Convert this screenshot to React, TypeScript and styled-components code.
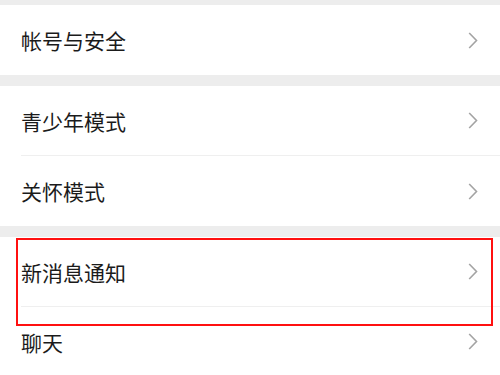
import styled, { createGlobalStyle } from "styled-components";

const GlobalStyle = createGlobalStyle`
  html, body {
    margin: 0;
    padding: 0;
    background: #ededed;
  }
  body {
    font-family: "Noto Sans CJK SC", "Noto Sans", sans-serif;
  }
`;

const Page = styled.div`
  display: flex;
  flex-direction: column;
  gap: 11px;
  padding-top: 5px;
  background: #ededed;
  min-height: 375px;
`;

const Group = styled.div`
  position: relative;
  background: #ffffff;
`;

const Row = styled.div`
  display: flex;
  align-items: center;
  justify-content: space-between;
  height: 69px;
  margin-left: 21px;
  padding-right: 22px;
  border-bottom: 1px solid #efefef;

  &:last-of-type {
    border-bottom: none;
    height: 70px;
  }
`;

const Label = styled.span`
  font-size: 21px;
  color: #1b1b1b;
  letter-spacing: 0;
`;

const Highlight = styled.div`
  position: absolute;
  top: 1px;
  left: 16px;
  width: 477px;
  height: 88px;
  box-sizing: border-box;
  border: 2px solid #ff1010;
  pointer-events: none;
`;

function Chevron() {
  return (
    <svg width="10" height="17" viewBox="0 0 10 17">
      <polyline
        points="1.2,1 8.5,8.5 1.2,16"
        fill="none"
        stroke="#a3a3a3"
        strokeWidth="1.6"
      />
    </svg>
  );
}

const groups = [
  ["帐号与安全"],
  ["青少年模式", "关怀模式"],
  ["新消息通知", "聊天"],
];

export default function App() {
  return (
    <>
      <GlobalStyle />
      <Page>
        {groups.map((items, gi) => (
          <Group key={gi}>
            {items.map((label) => (
              <Row key={label}>
                <Label>{label}</Label>
                <Chevron />
              </Row>
            ))}
            {gi === 2 && <Highlight />}
          </Group>
        ))}
      </Page>
    </>
  );
}
